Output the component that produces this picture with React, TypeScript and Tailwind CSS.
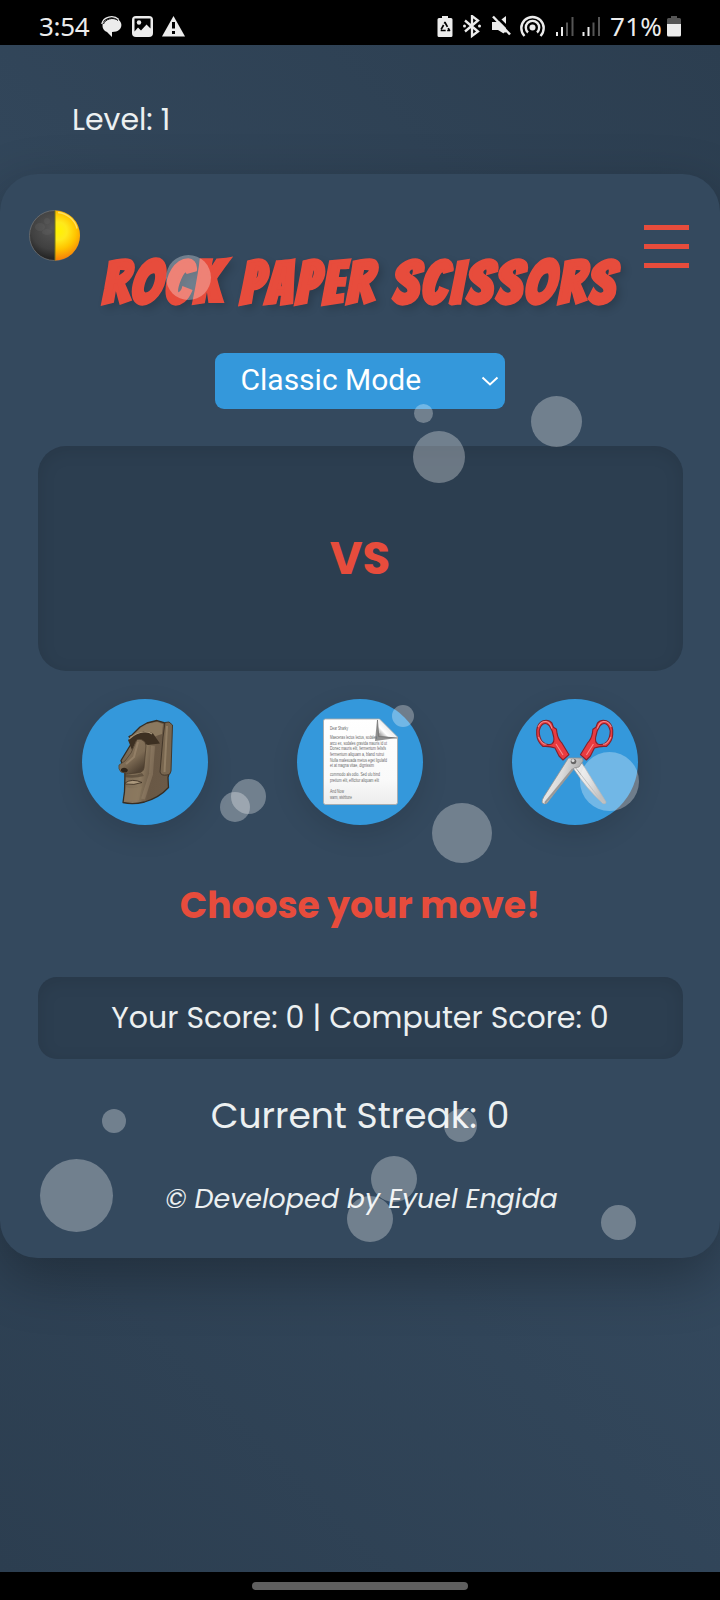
import React from "react";

const bubbles = [
  { x: 166, y: 255, d: 45 },
  { x: 414, y: 404, d: 19 },
  { x: 413, y: 430.5, d: 52 },
  { x: 531, y: 396, d: 51 },
  { x: 220, y: 792, d: 30 },
  { x: 231, y: 779, d: 35 },
  { x: 392, y: 705, d: 22 },
  { x: 432, y: 803, d: 60 },
  { x: 580, y: 752, d: 59 },
  { x: 102, y: 1109, d: 24 },
  { x: 444, y: 1109, d: 33 },
  { x: 40, y: 1159, d: 73 },
  { x: 371, y: 1156, d: 46 },
  { x: 347, y: 1196, d: 46 },
  { x: 600.5, y: 1205, d: 35 },
];

function StatusBar() {
  return (
    <div className="flex h-[45px] items-start bg-black pl-[39px] pt-[10px] font-['Noto_Sans',sans-serif] text-[26px] leading-[32px] text-[#ececec]">
      <span className="w-[62px] tracking-[-0.3px]">3:54</span>
      <svg className="mt-[5px]" width="86" height="24" viewBox="101 15 86 24" fill="#ececec">
        <path d="M103.500 22c4-4.500 11-4.800 15-2.200 3.500 2.300 3.800 7.200 1 9.700-1.900 1.900-4.500 2.300-7.500 2.500v5l-5-5c-4.500-1.700-5.500-6.500-3.500-10z" />
        <path d="M101.800 24c1.500-7.500 11.500-9.500 17-4.500" fill="none" stroke="#ececec" strokeWidth="1.300" />
        <path d="M103.500 24c1.500-5 10-7.500 14.500-3.500" fill="none" stroke="#000" strokeWidth="1" />
        <rect x="132" y="16" width="21" height="21" rx="4" />
        <path d="M134.500 18.500h16v10l-4-4-5.500 6-3-3-3.500 4z" fill="#000" />
        <circle cx="139" cy="22.500" r="2.200" />
        <path d="M173.500 16l11.500 20.500h-23z" />
        <path d="M172 22h3v6.500h-3zM172 31h3v3h-3z" fill="#000" />
      </svg>
      <svg className="ml-[249px] mt-[5px]" width="140" height="24" viewBox="436 15 140 24" fill="#ececec">
        <path d="M442 16h6v2h3q1.500 0 1.500 1.500v16q0 1.500-1.500 1.500h-12q-1.500 0-1.500-1.500v-16q0-1.500 1.500-1.500h3z" />
        <path d="M445 22.500l4.500 8h-9z" fill="none" stroke="#000" strokeWidth="1.700" strokeDasharray="5 1.500" strokeLinejoin="round" />
        <path d="M465 20.500l13 11-6 4.500V16l6 4.500-13 11" fill="none" stroke="#ececec" strokeWidth="2.300" />
        <circle cx="464.500" cy="26" r="1.500" />
        <circle cx="479.500" cy="26" r="1.500" />
        <path d="M492 22h6l8-6v19l-8-5h-6z" />
        <path d="M494 14l18 18" stroke="#000" strokeWidth="3" />
        <path d="M493 16.500l17 18" stroke="#ececec" strokeWidth="2.500" />
        <path d="M504 33l3 3" stroke="#000" strokeWidth="3" />
        <circle cx="532.500" cy="27.500" r="3" />
        <path d="M524.500 36a11.200 11.200 0 1 1 16 0M528 32.500a6.700 6.700 0 1 1 9 0" fill="none" stroke="#ececec" strokeWidth="2.400" />
        <path d="M556 32h2v4h-2zM561 27h2v9h-2z" />
        <path d="M566 22.500h2v13.500h-2zM571.500 17h2v19h-2z" fill="#555" />
      </svg>
      <svg className="ml-[5px] mt-[5px]" width="22" height="24" viewBox="581 15 22 24" fill="#ececec">
        <path d="M582.500 32h2v4h-2zM587.500 27h2v9h-2z" />
        <path d="M592.500 22.500h2v13.500h-2zM598 17h2v19h-2z" fill="#555" />
      </svg>
      <span className="ml-[7px] w-[56px] tracking-[0.3px]">71%</span>
      <svg className="mt-[5px]" width="16" height="24" viewBox="666 15 16 24">
        <path d="M671 16h6v2h2.500q1.500 0 1.500 1.500v4.500h-14v-4.500q0-1.500 1.500-1.500h2.500z" fill="#555" />
        <path d="M667 24h14v11q0 1.500-1.500 1.500h-11q-1.500 0-1.500-1.500z" fill="#ececec" />
      </svg>
    </div>
  );
}

function HalfMoon() {
  return (
    <svg className="mt-[36px] shrink-0" width="51" height="51" viewBox="0 0 51 51">
      <defs>
        <radialGradient id="moonLit" gradientUnits="userSpaceOnUse" cx="29" cy="21" r="30">
          <stop offset="0" stopColor="#fff200" />
          <stop offset="0.300" stopColor="#ffe91c" />
          <stop offset="0.600" stopColor="#ffc400" />
          <stop offset="1" stopColor="#f5780a" />
        </radialGradient>
        <radialGradient id="moonDark" cx="0.450" cy="0.350" r="0.600">
          <stop offset="0" stopColor="#565656" />
          <stop offset="0.700" stopColor="#404040" />
          <stop offset="1" stopColor="#262626" />
        </radialGradient>
      </defs>
      <circle cx="25.500" cy="25.500" r="25" fill="url(#moonDark)" stroke="#777" strokeWidth="0.700" />
      <path d="M26 0.500a25 25 0 0 1 0 50z" fill="url(#moonLit)" />
      <path d="M29 2.500c9 1 17 7 19 16" fill="none" stroke="#fff3a0" strokeWidth="1.500" opacity="0.600" />
      <path d="M26 0.500v50" stroke="#77771a" strokeWidth="1" />
      <g fill="#6a6a6a" opacity="0.250">
        <ellipse cx="11" cy="17" rx="5" ry="4" />
        <ellipse cx="18" cy="22" rx="5" ry="3" />
        <circle cx="18" cy="11" r="3" />
      </g>
    </svg>
  );
}

function Moai() {
  return (
    <svg width="126" height="126" viewBox="82 699 126 126">
      <defs>
        <linearGradient id="stone" x1="0" y1="0.300" x2="1" y2="0.600">
          <stop offset="0" stopColor="#73634f" />
          <stop offset="0.480" stopColor="#8a785f" />
          <stop offset="0.680" stopColor="#695845" />
          <stop offset="1" stopColor="#6b5a47" />
        </linearGradient>
        <linearGradient id="nose" x1="0" y1="0" x2="0.600" y2="1">
          <stop offset="0" stopColor="#8a7860" />
          <stop offset="0.650" stopColor="#7d6b54" />
          <stop offset="1" stopColor="#4f4132" />
        </linearGradient>
      </defs>
      <path d="M132 735l8-8 7-4 10-2.500 7 2 5 7v44l-1 4 0.500 10q-9 10-24 14.500-12 3-21.500 0.500l1.500-11 0.500-18-4-13 11-18-3-6z" fill="url(#stone)" stroke="#352d23" strokeWidth="1.300" strokeLinejoin="round" />
      <path d="M133 735l8-7 8-4 8-2 6 2-1 10-9 3q-6-6-20-2z" fill="#8b795f" />
      <path d="M128 740q8-8 16-8.500 6-0.500 9 2l7 10-12 1.500-12-4-4 9z" fill="#3d3022" />
      <path d="M129 739q8-7 15-7 5-0.500 8 2" fill="none" stroke="#a39176" strokeWidth="1.200" />
      <path d="M137 739.500q4-1.500 8 2.500l1 4-2 22q-1 5-7 5-9 2-16-1-3-3-2-7l6-4 6-8z" fill="url(#nose)" stroke="#4a3c2d" strokeWidth="0.700" />
      <path d="M138 742l-4 15-8 7" fill="none" stroke="#9b886d" strokeWidth="2" opacity="0.700" />
      <path d="M121 769q4-3 7 1l-1 2q-4 1-6-1z" fill="#30251a" />
      <path d="M124 773q8 4 18 0l2 3q-10 3-20 1z" fill="#4b3d2e" opacity="0.600" />
      <path d="M125 783q7-5 17-0.500-8 3-16.500 1.500z" fill="#ab987c" stroke="#403225" strokeWidth="0.900" />
      <path d="M126 787q7 3 16-1l-3 14-15 2z" fill="#8c795f" opacity="0.700" />
      <path d="M153 746l-2 28-8 25" stroke="#a69377" strokeWidth="4" opacity="0.350" fill="none" />
      <path d="M165 722.500l4-0.500 3.500 3-1.500 46q-0.500 4-4 4-6 1-7-3l3-35z" fill="#78664f" stroke="#43372a" strokeWidth="1" />
      <path d="M167 726l-2.500 46" stroke="#9b896e" strokeWidth="2" fill="none" opacity="0.700" />
    </svg>
  );
}

function Paper() {
  const lines = [
    { y: 729.5, t: "Dear Sharky", w: 18 },
    { y: 738.5, t: "Maecenas lectus lectus, sodales", w: 47 },
    { y: 744.5, t: "arcu ex, sodales gravida mauris id ut", w: 57 },
    { y: 750, t: "Donec mauris elit, fermentum felisfs", w: 56 },
    { y: 755.5, t: "fermentum aliquam a, bland rutrui", w: 54 },
    { y: 761.5, t: "Nulla malesuada metus eget ligulafd", w: 57 },
    { y: 767, t: "et at magna vitae, dignissim", w: 44 },
    { y: 776, t: "commodo als odio. Sed ulu bind", w: 50 },
    { y: 781.5, t: "pretium elit, efficitur aliquam elit", w: 49 },
    { y: 793, t: "And Now", w: 14 },
    { y: 799, t: "warm, wishbone", w: 22 },
  ];
  return (
    <svg width="126" height="126" viewBox="297 699 126 126">
      <defs>
        <linearGradient id="sheet" x1="0" y1="0" x2="0" y2="1">
          <stop offset="0" stopColor="#fff" />
          <stop offset="0.700" stopColor="#fafafa" />
          <stop offset="1" stopColor="#ececec" />
        </linearGradient>
        <linearGradient id="fold" x1="0.100" y1="0.900" x2="0.700" y2="0.300">
          <stop offset="0" stopColor="#999" />
          <stop offset="0.350" stopColor="#fff" />
          <stop offset="1" stopColor="#dedede" />
        </linearGradient>
      </defs>
      <path d="M325.500 719h54l18 18v65.500q0 2-2 2h-70q-2 0-2-2v-81.500q0-2 2-2z" fill="url(#sheet)" stroke="#aaa" strokeWidth="0.900" />
      {lines.map((l) => (
        <text key={l.y} x="330" y={l.y} textLength={l.w} lengthAdjust="spacingAndGlyphs" className="fill-[#666] font-['Liberation_Sans',sans-serif] text-[4.5px]">
          {l.t}
        </text>
      ))}
      <path d="M377 720l-2 21 22-3-18-5z" fill="#555" opacity="0.650" />
      <path d="M378.500 719l1 17 17.500 2z" fill="url(#fold)" />
      <path d="M377.500 720l1 16.500 18.500 1.500" fill="none" stroke="#777" strokeWidth="1" />
    </svg>
  );
}

function ScissorHandle() {
  return (
    <>
      <path
        d="M536.700 730q1-7 6.300-9.300 6-1.500 9 2.500l1.500 4 3 2 0.500 4q1 6 5 10l7 11.500-6 5.300-4-4-4-8q-5-2-12-1.500-6-5-6.300-12zM539.200 731q0 7 3.500 11 4 4 9 2 3-2 2-7l-1.500-6-3-5.500q-3-3-6-1.500-3 2-4 7z"
        fill="#ea3b40"
        fillRule="evenodd"
        stroke="#84212c"
        strokeWidth="1.100"
        strokeLinejoin="round"
      />
      <path d="M538 727q3-6 8-5.500 4 0.500 6 7M538.500 737q3 7 8 7.500M556 744l7 11" fill="none" stroke="#ffc2c2" strokeWidth="1.100" opacity="0.600" />
    </>
  );
}

function Scissors() {
  return (
    <svg width="126" height="126" viewBox="512 699 126 126">
      <defs>
        <linearGradient id="blade" x1="0" y1="0" x2="1" y2="0.300">
          <stop offset="0" stopColor="#f5f5f5" />
          <stop offset="0.550" stopColor="#dadada" />
          <stop offset="1" stopColor="#a5a5a5" />
        </linearGradient>
      </defs>
      <path d="M573 768l9-5 24 39q0 2.500-3 1.500-16-14-30-35.500z" fill="url(#blade)" stroke="#999" strokeWidth="0.700" />
      <path d="M575 767l28 36" stroke="#aaa" strokeWidth="1" />
      <ScissorHandle />
      <g transform="translate(1149.4 0) scale(-1 1)">
        <ScissorHandle />
      </g>
      <path d="M568.500 758h14l0.500 3-4 6-5 1-27 35q-3 2-5-0.500 0-3 2-6z" fill="url(#blade)" stroke="#909090" strokeWidth="0.800" />
      <path d="M573 769l-28 34" stroke="#999" strokeWidth="2" />
      <circle cx="573.500" cy="761.500" r="2.800" fill="#666" />
      <circle cx="573" cy="760.500" r="1.600" fill="#ddd" />
    </svg>
  );
}

function Choice({ label, children }: { label: string; children: React.ReactNode }) {
  return (
    <button aria-label={label} className="size-[126px] rounded-full bg-[#3498db] shadow-[0_9px_28px_rgba(0,0,0,0.12)]">
      {children}
    </button>
  );
}

export default function App() {
  return (
    <div className="relative flex h-[1600px] w-[720px] flex-col overflow-hidden bg-black font-['Poppins','Inter',sans-serif] text-[#ecf0f1]">
      <StatusBar />
      <main className="h-[1527px] overflow-hidden bg-[linear-gradient(45deg,#2c3e50,#34495e,#2c3e50)]">
        <div className="h-[129px] pl-[72px] pt-[53px] text-[30px] leading-[44px]">Level: 1</div>
        <section className="h-[1084px] rounded-[37.5px] bg-[#34495e] shadow-[0_19px_56px_rgba(0,0,0,0.3)]">
          <header className="flex h-[179px] items-start pl-[29px]">
            <HalfMoon />
            <h1 className="ml-[22.5px] mt-[73px] w-[541.5px] shrink-0 whitespace-nowrap font-['Bangers',sans-serif] text-[60px] font-bold leading-[72px] tracking-[3.75px] text-[#e74c3c] [-webkit-text-stroke:1.4px_#e74c3c] [text-shadow:4px_4px_8px_rgba(0,0,0,0.18)]">
              ROCK PAPER SCISSORS
            </h1>
            <button aria-label="Menu" className="mt-[51px] flex w-[45px] shrink-0 flex-col gap-[14px]">
              <span className="h-[5px] bg-[#e74c3c]" />
              <span className="h-[5px] bg-[#e74c3c]" />
              <span className="h-[5px] bg-[#e74c3c]" />
            </button>
          </header>
          <div className="px-[37.5px]">
            <button className="mx-auto flex h-[56px] w-[290px] items-center justify-between rounded-[9px] bg-[#3498db] pl-[25.5px] pr-[6px] font-['Roboto',sans-serif] text-[30px] leading-[54px] text-white">
              <span className="pb-[2px]">Classic Mode</span>
              <svg width="18" height="12" viewBox="0 0 18 12" fill="none" stroke="#fff" strokeWidth="2">
                <path d="M1.500 2.500l7.500 7 7.500-7" />
              </svg>
            </button>
            <div className="mt-[37px] flex h-[225px] items-center justify-center rounded-[28px] bg-[#2c3e50] text-[45px] font-bold text-[#e74c3c] shadow-[inset_0_4px_18px_rgba(0,0,0,0.1)]">
              VS
            </div>
            <div className="mt-[28px] flex justify-between px-[44.5px]">
              <Choice label="Rock"><Moai /></Choice>
              <Choice label="Paper"><Paper /></Choice>
              <Choice label="Scissors"><Scissors /></Choice>
            </div>
            <div className="mt-[53px] h-[56px] text-center text-[36px] font-bold leading-[56px] text-[#e74c3c]">Choose your move!</div>
            <div className="mt-[43px] h-[82px] whitespace-nowrap rounded-[19px] bg-[#2c3e50] text-center text-[30px] leading-[82px] shadow-[inset_0_4px_18px_rgba(0,0,0,0.1)]">
              Your Score: 0 | Computer Score: 0
            </div>
            <div className="mt-[30px] h-[54px] text-center text-[36px] leading-[54px]">Current Streak: 0</div>
            <footer className="mt-[35px] h-[42px] pl-[3px] text-center text-[26.900px] italic leading-[42px]">© Developed by Eyuel Engida</footer>
          </div>
        </section>
      </main>
      <div className="flex h-[28px] justify-center bg-black pt-[10px]">
        <div className="h-[8px] w-[216px] rounded-full bg-[#5f5f5f]" />
      </div>
      {bubbles.map((b, i) => (
        <span
          key={i}
          className="pointer-events-none absolute rounded-full bg-white/30"
          style={{ left: b.x, top: b.y, width: b.d, height: b.d }}
        />
      ))}
    </div>
  );
}
